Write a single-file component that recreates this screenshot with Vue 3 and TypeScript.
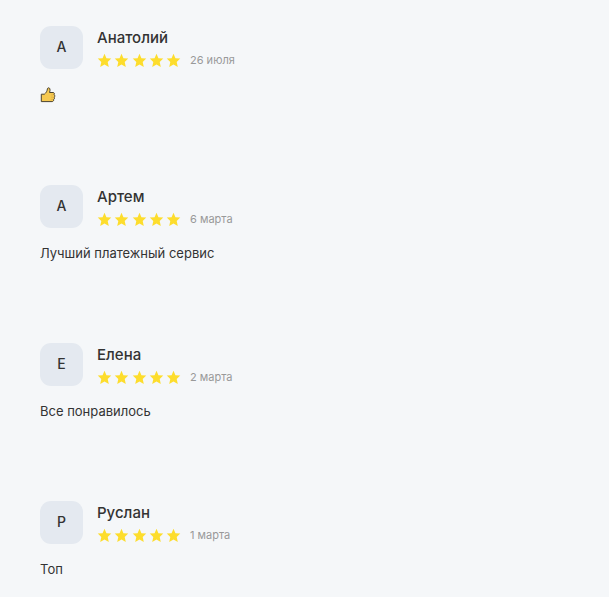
<script setup lang="ts">
interface Review {
  id: number
  name: string
  date: string
  rating: number
  text?: string
}

const reviews: Review[] = [
  { id: 1, name: 'Анатолий', date: '26 июля', rating: 5 },
  { id: 2, name: 'Артем', date: '6 марта', rating: 5, text: 'Лучший платежный сервис' },
  { id: 3, name: 'Елена', date: '2 марта', rating: 5, text: 'Все понравилось' },
  { id: 4, name: 'Руслан', date: '1 марта', rating: 5, text: 'Топ' },
]
</script>

<template>
  <main class="reviews">
    <article v-for="review in reviews" :key="review.id" class="review">
      <header class="head">
        <div class="avatar" aria-hidden="true">{{ review.name.charAt(0) }}</div>
        <div class="info">
          <h2 class="name">{{ review.name }}</h2>
          <div class="meta">
            <div class="stars">
              <svg v-for="n in review.rating" :key="n" class="star" viewBox="0 0 14 14" aria-hidden="true">
                <path d="M7 .6 8.8 4.8 13.3 5.2 10 8.3 11 13 7 10.7 3 13 4 8.3.7 5.2 5.2 4.8Z" />
              </svg>
            </div>
            <time class="date">{{ review.date }}</time>
          </div>
        </div>
      </header>
      <p v-if="review.text" class="text">{{ review.text }}</p>
      <div v-else class="reaction">
        <svg class="thumb" viewBox="0 0 16 16" aria-hidden="true">
          <path
            d="M1.3 7.2H4.4C5.8 6 6.7 4.8 7.1 3.3L7.5 1.4C7.9.5 9.6.7 9.9 1.9C10.2 3.1 10 4.3 9.5 5.5H13C14.3 5.5 14.8 6.8 14.1 7.7C15 8.3 15 9.6 14.2 10.2C14.8 11 14.5 12 13.7 12.4C13.9 13.6 13.2 14.5 12.1 14.6H1.3Z"
            fill="#f6c951" stroke="#4b4330" stroke-width="1" stroke-linejoin="round"
          />
          <path d="M11 7.9h2.4M11 10.2h2.4M10.8 12.4h2.2" fill="none" stroke="#d5a640" stroke-width=".6" />
        </svg>
      </div>
    </article>
  </main>
</template>

<style>
body {
  background: #f5f7f9;
}
</style>

<style scoped>
.reviews {
  padding: 26px 40px 0;
  font-family: Inter, "Liberation Sans", sans-serif;
  color: #333;
}

.review + .review {
  margin-top: 80px;
}

.head {
  display: flex;
  align-items: flex-start;
  gap: 14px;
}

.avatar {
  box-sizing: border-box;
  display: flex;
  align-items: center;
  justify-content: center;
  width: 43px;
  height: 43px;
  padding-bottom: 2px;
  border-radius: 11px;
  background: #e4e9f0;
  font-size: 14px;
  font-weight: 500;
}

.name {
  margin: 0;
  font-size: 15px;
  font-weight: 500;
  line-height: 24px;
}

.meta {
  display: flex;
  align-items: center;
  gap: 9px;
  height: 20px;
}

.stars {
  display: flex;
  justify-content: space-between;
  width: 84px;
}

.star {
  width: 15px;
  height: 15px;
  fill: #fddd2d;
}

.date {
  font-size: 11px;
  line-height: 16px;
  color: #999;
}

.text {
  margin: 14px 0 0;
  font-size: 13px;
  line-height: 20px;
}

.reaction {
  display: flex;
  align-items: flex-end;
  height: 21px;
  padding-bottom: 2px;
  box-sizing: border-box;
  margin-top: 14px;
}

.thumb {
  width: 16px;
  height: 16px;
}
</style>
